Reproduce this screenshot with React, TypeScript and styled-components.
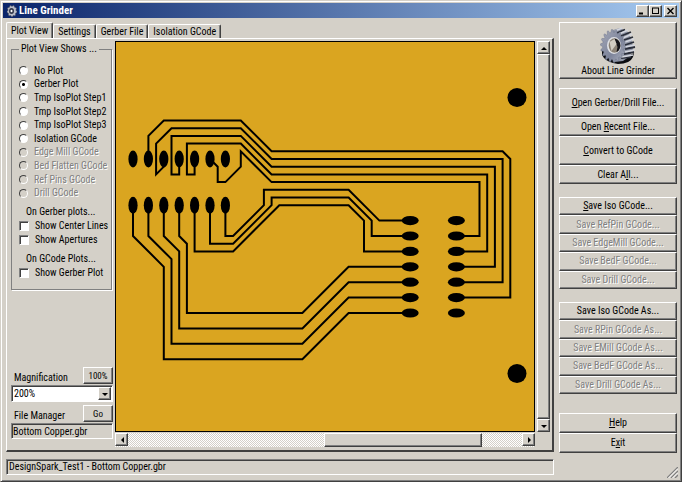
import React from "react";
import styled, { createGlobalStyle, css } from "styled-components";

const FACE = "#d4d0c8";
const SHADOW = "#808080";
const DARK = "#404040";
const FONT = '"Roboto Condensed", Roboto, "Liberation Sans", sans-serif';

const GlobalStyle = createGlobalStyle`
  * { box-sizing: border-box; }
  body { margin: 0; background: ${FACE}; }
  body, button, input, select {
    font-family: ${FONT};
    font-size: 10px;
    line-height: 12px;
    color: #000;
  }
`;

const raised = css`
  border: 1px solid;
  border-color: #fff ${DARK} ${DARK} #fff;
  box-shadow: inset -1px -1px 0 ${SHADOW};
  background: ${FACE};
`;

const sunken = css`
  border: 1px solid;
  border-color: ${SHADOW} #fff #fff ${SHADOW};
  box-shadow: inset 1px 1px 0 ${DARK};
`;

const Window = styled.div`
  min-height: 100vh;
  display: flex;
  flex-direction: column;
  padding: 2px;
  background: ${FACE};
  border: 1px solid;
  border-color: ${FACE} ${DARK} ${DARK} ${FACE};
  box-shadow: inset 1px 1px 0 #fff, inset -1px -1px 0 ${SHADOW};
`;

const TitleBar = styled.header`
  height: 15px;
  display: flex;
  align-items: center;
  gap: 2px;
  padding: 0 2px 0 4px;
  background: linear-gradient(90deg, #0a246a, #a6caf0);
`;

const Title = styled.h1`
  flex: 1;
  margin: 0;
  font-size: 11px;
  line-height: 14px;
  font-weight: bold;
  color: #fff;
`;

const CaptionButtons = styled.div`
  display: flex;
`;

const CaptionButton = styled.button<{ $apart?: boolean }>`
  ${raised}
  width: 13px;
  height: 12px;
  padding: 0;
  display: grid;
  place-items: center;
  margin-left: ${(p) => (p.$apart ? 2 : 0)}px;
`;

const Body = styled.div`
  flex: 1;
  display: grid;
  grid-template-columns: minmax(0, 1fr) 118px;
  gap: 5px;
  padding: 4px 2px 4px 3px;
`;

const Main = styled.main`
  display: flex;
  flex-direction: column;
`;

const TabList = styled.div`
  display: flex;
  align-items: flex-end;
  height: 16px;
`;

const Tab = styled.button<{ $active?: boolean }>`
  height: ${(p) => (p.$active ? 17 : 14)}px;
  margin-bottom: ${(p) => (p.$active ? -1 : 0)}px;
  padding: 0 4px;
  white-space: nowrap;
  background: ${FACE};
  border: 1px solid;
  border-color: #fff ${DARK} transparent #fff;
  border-bottom: 0;
  border-radius: 2px 2px 0 0;
  box-shadow: inset -1px 0 0 ${SHADOW};
`;

const Panel = styled.section`
  flex: 1;
  display: grid;
  grid-template-columns: 102px minmax(0, 1fr) 13px;
  grid-template-rows: minmax(0, 1fr) 14px;
  column-gap: 2px;
  row-gap: 1px;
  padding: 2px 2px 3px 4px;
  border: 1px solid;
  border-color: #fff ${DARK} ${DARK} #fff;
  border-right-width: 2px;
  border-bottom-width: 2px;
`;

const Options = styled.div`
  grid-row: 1 / 3;
  display: flex;
  flex-direction: column;
  padding: 2px 0 8px;
`;

const Group = styled.fieldset`
  min-width: 0;
  margin: 0 1px 0 0;
  padding: 9px 0 9px 7px;
  border: 1px solid ${SHADOW};
  box-shadow: 1px 1px 0 #fff;
  white-space: nowrap;
`;

const Legend = styled.legend`
  padding: 0 2px;
`;

const RadioList = styled.div`
  display: grid;
  grid-auto-rows: 1fr;
  height: 136px;
`;

const Choice = styled.label<{ $off?: boolean }>`
  display: flex;
  align-items: center;
  gap: 6px;
  ${(p) => p.$off && css`color: ${SHADOW}; text-shadow: 1px 1px 0 #fff;`}
`;

const Radio = styled.input`
  appearance: none;
  flex: none;
  width: 9px;
  height: 9px;
  margin: 0;
  border-radius: 50%;
  border: 1px solid;
  border-color: ${DARK} #fff #fff ${DARK};
  background: #fff;
  &:checked { background: radial-gradient(circle, #000 0 1px, #fff 2px); }
  &:disabled { background: ${FACE}; }
`;

const CheckList = styled.div`
  display: grid;
  grid-auto-rows: 14px;
`;

const Check = styled.input`
  ${sunken}
  appearance: none;
  flex: none;
  width: 10px;
  height: 10px;
  margin: 0;
  background: #fff;
  &:checked { background: #000; }
`;

const Subtitle = styled.div`
  margin: 6px 0 1px 7px;
`;

const Tools = styled.div`
  margin-top: auto;
  display: flex;
  flex-direction: column;
`;

const ToolRow = styled.div`
  display: flex;
  align-items: flex-end;
  justify-content: space-between;
  margin-top: 3px;
  padding-left: 3px;
  white-space: nowrap;
`;

const SmallButton = styled.button`
  ${raised}
  width: 30px;
  height: 17px;
  padding: 0;
  font-size: 9px;
`;

const SelectBox = styled.div`
  ${sunken}
  display: grid;
  grid-template-columns: minmax(0, 1fr) 13px;
  height: 17px;
  margin-top: 1px;
  padding: 1px;
  background: #fff;
`;

const Select = styled.select`
  appearance: none;
  grid-area: 1 / 1 / 2 / 3;
  border: 0;
  padding: 0 1px;
  background: transparent;
`;

const SelectArrow = styled.span`
  ${raised}
  grid-area: 1 / 2;
  display: grid;
  place-items: center;
  pointer-events: none;
`;

const PathField = styled.input`
  ${sunken}
  width: 100%;
  height: 16px;
  margin-top: 1px;
  padding: 0 1px;
  background: ${FACE};
`;

const PlotArea = styled.div`
  min-height: 320px;
  border: 1px solid #000;
  background: #daa520;
  overflow: hidden;
  svg { display: block; width: 100%; height: 100%; }
`;

const ScrollBar = styled.div<{ $vertical?: boolean }>`
  display: flex;
  flex-direction: ${(p) => (p.$vertical ? "column" : "row")};
  grid-column: ${(p) => (p.$vertical ? 3 : 2)};
  background: repeating-conic-gradient(#fff 0 25%, ${FACE} 0 50%) 0 0 / 2px 2px;
`;

const ScrollButton = styled.button`
  ${raised}
  flex: none;
  width: 13px;
  height: 13px;
  padding: 0;
  display: grid;
  place-items: center;
`;

const Track = styled.div<{ $vertical?: boolean; $before?: number; $thumb?: number; $after?: number }>`
  flex: 1;
  display: grid;
  grid-template-columns: ${(p) => (p.$vertical ? "1fr" : `${p.$before}fr ${p.$thumb}fr ${p.$after}fr`)};
`;

const Thumb = styled.div<{ $vertical?: boolean }>`
  ${raised}
  grid-column: ${(p) => (p.$vertical ? 1 : 2)};
`;

const StatusBar = styled.footer`
  ${sunken}
  height: 16px;
  margin-top: 7px;
  padding: 1px 2px;
  white-space: nowrap;
`;

const Side = styled.nav`
  display: flex;
  flex-direction: column;
`;

const SideGroup = styled.div<{ $top: number; $rows: string; $height: number }>`
  display: grid;
  margin-top: ${(p) => p.$top}px;
  grid-template-rows: ${(p) => p.$rows};
  height: ${(p) => p.$height}px;
`;

const SideButton = styled.button`
  ${raised}
  padding: 0;
  white-space: nowrap;
  &:disabled { color: ${SHADOW}; text-shadow: 1px 1px 0 #fff; }
`;

const AboutButton = styled(SideButton)`
  display: flex;
  flex-direction: column;
  align-items: center;
  height: 57px;
  padding-top: 4px;
`;

const Grip = styled.svg`
  align-self: flex-end;
  margin: auto -1px -3px 0;
`;

const Arrow = ({ dir }: { dir: "up" | "down" | "left" | "right" }) => {
  const shapes = {
    up: "0,5 6,5 3,2",
    down: "0,2 6,2 3,5",
    left: "5,0 5,6 2,3",
    right: "2,0 2,6 5,3",
  };
  return (
    <svg width="6" height="6" viewBox="0 0 6 6" aria-hidden="true">
      <polygon points={shapes[dir]} />
    </svg>
  );
};

const teeth = (cx: number, cy: number, rx: number, ry: number, count: number) =>
  Array.from({ length: count * 4 }, (_, i) => {
    const a = ((i + 0.5) / (count * 4)) * Math.PI * 2;
    const k = i % 4 < 2 ? 1 : 0.83;
    return `${(cx + Math.cos(a) * rx * k).toFixed(1)},${(cy + Math.sin(a) * ry * k).toFixed(1)}`;
  }).join(" ");

const Gear = () => (
  <svg width="36" height="38" viewBox="0 0 36 38" aria-hidden="true">
    <defs>
      <linearGradient id="face" x1="0" y1="0" x2="1" y2="1">
        <stop offset="0" stopColor="#a4a8b8" />
        <stop offset="0.6" stopColor="#7d849a" />
        <stop offset="1" stopColor="#b4b8c4" />
      </linearGradient>
    </defs>
    <path d="M2 22 L2 28 Q5 34 13 36 L18 37 Q30 37 33 30 L34 26 L26 30 L15 34 Z" fill="#0b0c10" />
    <path d="M13 3 L20 1 L28 5 L32 13 L33 22 L30 29 L23 34 L14 35 Z" fill="#9096a6" />
    <g stroke="#2a2e3a" strokeWidth="1.8">
      <path d="M17 6 L25 2.5 M21 9 L31 5 M24 13 L33 10 M25 18 L34 15 M25 22 L35 20 M24 27 L34 25 M21 31 L31 30" />
    </g>
    <g stroke="#d3d6de" strokeWidth="1.5">
      <path d="M15 4 L22 1 M19 7 L28 3 M23 11 L32 7 M25 15 L34 12 M25 20 L35 18 M25 25 L35 23 M22 30 L33 28" />
    </g>
    <polygon points={teeth(13, 19, 12.5, 16.5, 18)} fill="url(#face)" stroke="#636a80" strokeWidth="0.4" />
    <ellipse cx="14" cy="18.5" rx="7" ry="8.5" fill="#dfe1e5" />
    <ellipse cx="14.5" cy="18.5" rx="5.8" ry="7.3" fill="#8b8276" />
    <path d="M14.5 11.5 Q20.5 13 20.5 19 Q19.5 24 16.5 25 L17.5 20 Z" fill="#15151a" />
    <path d="M9.5 15 L14.5 12 L16.5 17 L11.5 24 Z" fill="#d2cdc3" />
  </svg>
);

const AppIcon = () => (
  <svg width="10" height="12" viewBox="0 0 10 12" aria-hidden="true">
    <polygon points={teeth(5, 6, 5, 5.8, 9)} fill="#b9bdca" stroke="#555" strokeWidth="0.5" />
    <ellipse cx="4.5" cy="6" rx="2.5" ry="3" fill="#33384a" />
    <ellipse cx="4.5" cy="6" rx="1" ry="1.3" fill="#fff" />
  </svg>
);

/* Board geometry is kept in half-pitch steps counted from the first pad. */
type Point = [number, number];
const STEP = 7.7;
const px = (i: number) => 17 + i * STEP;
const py = (j: number) => 117 + j * STEP;

const traces: Point[][] = [
  [[2, 0], [2, -3], [4, -5], [14, -5], [18, -1], [48, -1], [49, 0], [49, 18], [42, 18]],
  [[4, 0], [4, 1], [3, 2], [3, -2], [5, -4], [14, -4], [18, 0], [48, 0], [48, 16], [42, 16]],
  [[6, 0], [6, 2], [5, 2], [5, -3], [14, -3], [18, 1], [47, 1], [47, 14], [42, 14]],
  [[8, 0], [8, 2], [7, 2], [7, -2], [14, -2], [18, 2], [46, 2], [46, 12], [42, 12]],
  [[10, 0], [11, 1], [11, 3], [12, 3], [14, 1], [14, -1], [18, 3], [45, 3], [45, 10], [42, 10]],
  [[12, 6], [12, 10], [13, 10], [17, 6], [17, 4], [28, 4], [32, 8], [36, 8]],
  [[10, 6], [10, 11], [13, 11], [18, 6], [18, 5], [28, 5], [31, 8], [31, 10], [36, 10]],
  [[8, 6], [8, 12], [13, 12], [19, 6], [28, 6], [30, 8], [30, 12], [36, 12]],
  [[6, 6], [6, 10], [7, 11], [7, 20], [22, 20], [28, 14], [36, 14]],
  [[4, 6], [4, 10], [6, 12], [6, 22], [22, 22], [28, 16], [36, 16]],
  [[2, 6], [2, 10], [5, 13], [5, 24], [22, 24], [28, 18], [36, 18]],
  [[0, 6], [0, 10], [4, 14], [4, 26], [22, 26], [28, 20], [36, 20]],
];

const dipPads: Point[] = [0, 6].flatMap((j) => [0, 2, 4, 6, 8, 10, 12].map((i): Point => [i, j]));
const headerPads: Point[] = [36, 42].flatMap((i) => [8, 10, 12, 14, 16, 18, 20].map((j): Point => [i, j]));

const Board = () => (
  <svg role="img" aria-label="Bottom copper plot">
    <g fill="none" stroke="#000" strokeWidth="2">
      {traces.map((t, n) => (
        <polyline key={n} points={t.map(([i, j]) => `${px(i)},${py(j)}`).join(" ")} />
      ))}
    </g>
    {dipPads.map(([i, j]) => (
      <ellipse key={`${i}-${j}`} cx={px(i)} cy={py(j)} rx="4.6" ry="8.5" />
    ))}
    {headerPads.map(([i, j]) => (
      <ellipse key={`${i}-${j}`} cx={px(i)} cy={py(j)} rx="8.5" ry="4.6" />
    ))}
    <circle cx="401" cy="55.5" r="9.5" />
    <circle cx="401" cy="331.5" r="9.5" />
  </svg>
);

const plots = [
  "No Plot", "Gerber Plot", "Tmp IsoPlot Step1", "Tmp IsoPlot Step2", "Tmp IsoPlot Step3",
  "Isolation GCode", "Edge Mill GCode", "Bed Flatten GCode", "Ref Pins GCode", "Drill GCode",
];

export default function App() {
  return (
    <>
      <GlobalStyle />
      <Window>
        <TitleBar>
          <AppIcon />
          <Title>Line Grinder</Title>
          <CaptionButtons>
            <CaptionButton aria-label="Minimize">
              <svg width="9" height="8"><path d="M1 6.5h4" stroke="#000" strokeWidth="2" /></svg>
            </CaptionButton>
            <CaptionButton aria-label="Maximize">
              <svg width="9" height="8"><path d="M1 1h7M1.5 1v6M7.5 1v6M1 6.5h7" stroke="#000" /></svg>
            </CaptionButton>
            <CaptionButton $apart aria-label="Close">
              <svg width="9" height="8"><path d="M1.5 1l6 6M7.5 1l-6 6" stroke="#000" strokeWidth="1.4" /></svg>
            </CaptionButton>
          </CaptionButtons>
        </TitleBar>
        <Body>
          <Main>
            <TabList role="tablist">
              <Tab $active role="tab" aria-selected="true">Plot View</Tab>
              <Tab role="tab" aria-selected="false">Settings</Tab>
              <Tab role="tab" aria-selected="false">Gerber File</Tab>
              <Tab role="tab" aria-selected="false">Isolation GCode</Tab>
            </TabList>
            <Panel role="tabpanel">
              <Options>
                <Group>
                  <Legend>Plot View Shows ...</Legend>
                  <RadioList>
                    {plots.map((name, n) => (
                      <Choice key={name} $off={n > 5}>
                        <Radio type="radio" name="plot" defaultChecked={n === 1} disabled={n > 5} />
                        {name}
                      </Choice>
                    ))}
                  </RadioList>
                  <Subtitle>On Gerber plots...</Subtitle>
                  <CheckList>
                    <Choice><Check type="checkbox" />Show Center Lines</Choice>
                    <Choice><Check type="checkbox" />Show Apertures</Choice>
                  </CheckList>
                  <Subtitle>On GCode Plots...</Subtitle>
                  <CheckList>
                    <Choice><Check type="checkbox" />Show Gerber Plot</Choice>
                  </CheckList>
                </Group>
                <Tools>
                  <ToolRow>
                    <label htmlFor="zoom">Magnification</label>
                    <SmallButton>100%</SmallButton>
                  </ToolRow>
                  <SelectBox>
                    <Select id="zoom" defaultValue="200%">
                      <option>100%</option>
                      <option>200%</option>
                    </Select>
                    <SelectArrow><Arrow dir="down" /></SelectArrow>
                  </SelectBox>
                  <ToolRow>
                    <label htmlFor="file">File Manager</label>
                    <SmallButton>Go</SmallButton>
                  </ToolRow>
                  <PathField id="file" readOnly value="Bottom Copper.gbr" />
                </Tools>
              </Options>
              <PlotArea><Board /></PlotArea>
              <ScrollBar $vertical>
                <ScrollButton aria-label="Scroll up"><Arrow dir="up" /></ScrollButton>
                <Track $vertical><Thumb $vertical /></Track>
                <ScrollButton aria-label="Scroll down"><Arrow dir="down" /></ScrollButton>
              </ScrollBar>
              <ScrollBar>
                <ScrollButton aria-label="Scroll left"><Arrow dir="left" /></ScrollButton>
                <Track $before={196} $thumb={158} $after={40}><Thumb /></Track>
                <ScrollButton aria-label="Scroll right"><Arrow dir="right" /></ScrollButton>
              </ScrollBar>
            </Panel>
            <StatusBar>DesignSpark_Test1 - Bottom Copper.gbr</StatusBar>
          </Main>
          <Side>
            <AboutButton><Gear />About Line Grinder</AboutButton>
            <SideGroup $top={9} $rows="29fr 19fr 29fr 19fr" $height={96}>
              <SideButton><u>O</u>pen Gerber/Drill File...</SideButton>
              <SideButton>Open <u>R</u>ecent File...</SideButton>
              <SideButton><u>C</u>onvert to GCode</SideButton>
              <SideButton>Clear A<u>l</u>l...</SideButton>
            </SideGroup>
            <SideGroup $top={13} $rows="repeat(5, 1fr)" $height={92}>
              <SideButton><u>S</u>ave Iso GCode...</SideButton>
              <SideButton disabled>Save RefPin GCode...</SideButton>
              <SideButton disabled>Save EdgeMill GCode...</SideButton>
              <SideButton disabled>Save BedF GCode...</SideButton>
              <SideButton disabled>Save Drill GCode...</SideButton>
            </SideGroup>
            <SideGroup $top={13} $rows="repeat(5, 1fr)" $height={92}>
              <SideButton>Save Iso GCode As...</SideButton>
              <SideButton disabled>Save RPin GCode As...</SideButton>
              <SideButton disabled>Save EMill GCode As...</SideButton>
              <SideButton disabled>Save BedF GCode As...</SideButton>
              <SideButton disabled>Save Drill GCode As...</SideButton>
            </SideGroup>
            <SideGroup $top={19} $rows="1fr 1fr" $height={40}>
              <SideButton><u>H</u>elp</SideButton>
              <SideButton>E<u>x</u>it</SideButton>
            </SideGroup>
            <Grip width="11" height="11" viewBox="0 0 11 11" aria-hidden="true">
              <path d="M0 11L11 0M4 11L11 4M8 11L11 8" stroke="#808080" strokeWidth="1.3" />
              <path d="M1.5 11L11 1.5M5.5 11L11 5.5" stroke="#fff" />
            </Grip>
          </Side>
        </Body>
      </Window>
    </>
  );
}
